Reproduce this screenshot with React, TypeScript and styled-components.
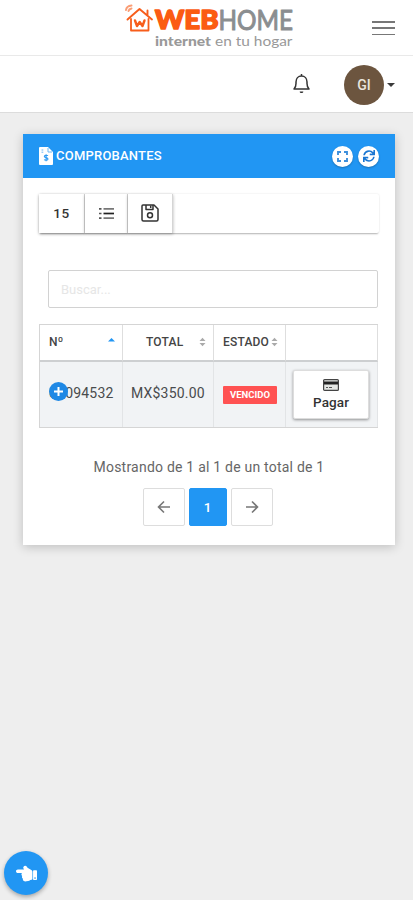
import React from "react";
import styled, { createGlobalStyle } from "styled-components";
import { FaHandPointLeft, FaSync } from "react-icons/fa";

const GlobalStyle = createGlobalStyle`
  * { box-sizing: border-box; }
  body { margin: 0; background: #eeeeee; font-family: Roboto, sans-serif; color: #333; }
  button, input { font-family: inherit; }
  svg { display: block; flex: none; overflow: visible; }
`;

const Page = styled.div`
  width: 413px;
  min-height: 900px;
  display: flex;
  flex-direction: column;
  background: #eeeeee;
`;

const BrandBar = styled.header`
  height: 56px;
  display: flex;
  justify-content: flex-end;
  align-items: flex-start;
  gap: 72px;
  padding-right: 18px;
  background: #fff;
  border-bottom: 1px solid #e9e9e9;
`;

const MenuButton = styled.button`
  width: 23px;
  height: 14px;
  margin-top: 21px;
  padding: 0;
  border: 0;
  background: none;
  display: flex;
  flex-direction: column;
  justify-content: space-between;
`;

const MenuLine = styled.span`
  width: 100%;
  height: 1.5px;
  background: #777;
`;

const UserBar = styled.nav`
  height: 57px;
  display: flex;
  justify-content: flex-end;
  align-items: center;
  padding-right: 18px;
  background: #fff;
  border-bottom: 1px solid #dcdcdc;
`;

const Avatar = styled.div`
  width: 40px;
  height: 40px;
  margin: 1px 3px 0 33px;
  border-radius: 50%;
  background: #6c553f;
  color: #e9e4de;
  display: flex;
  align-items: center;
  justify-content: center;
  font-size: 14px;
  font-weight: 500;
`;

const Caret = styled.span`
  margin-top: 1px;
  border: 4px solid transparent;
  border-top-color: #3b3b3b;
  border-bottom: 0;
`;

const Card = styled.main`
  width: 372px;
  height: 411px;
  margin: 21px 0 0 23px;
  background: #fff;
  box-shadow: 0 2px 10px rgba(0, 0, 0, 0.2);
`;

const CardHeader = styled.div`
  height: 44px;
  padding: 0 16px;
  display: flex;
  align-items: center;
  background: #2196f3;
  color: #fff;
`;

const CardTitle = styled.h1`
  margin: 0 auto 0 3px;
  font-size: 13px;
  line-height: 18px;
  font-weight: 500;
  letter-spacing: 0.22px;
`;

const RoundButton = styled.button`
  width: 21px;
  height: 21px;
  margin-left: 5px;
  padding: 0;
  border: 0;
  border-radius: 50%;
  background: #fff;
  color: #1976d2;
  display: flex;
  align-items: center;
  justify-content: center;
  box-shadow: 0 1px 2px rgba(0, 0, 0, 0.25);
`;

const CardBody = styled.div`
  padding: 16px 16px 0;
`;

const Toolbar = styled.div`
  height: 39px;
  display: flex;
  border-radius: 2px;
  box-shadow: 0 2px 2px -1px rgba(0, 0, 0, 0.28), 0 0 2px rgba(0, 0, 0, 0.12);
`;

const ToolButton = styled.button<{ $width: number }>`
  width: ${(p) => p.$width}px;
  height: 39px;
  padding: 0 0 1px;
  border: 0;
  border-right: 1px solid #d5d5d5;
  background: #fff;
  color: #333;
  font-size: 13.5px;
  font-weight: 500;
  letter-spacing: 0.6px;
  display: flex;
  align-items: center;
  justify-content: center;
  box-shadow: 0 1px 3px rgba(0, 0, 0, 0.3);
`;

const Search = styled.input`
  display: block;
  width: 330px;
  height: 38px;
  margin: 37px 0 16px 9px;
  padding: 0 12px;
  border: 1px solid #d2d2d2;
  border-radius: 2px;
  background: #fff;
  font-size: 13px;
  letter-spacing: 0;
  &::placeholder { color: #e6e6e6; opacity: 1; }
`;

const Table = styled.div`
  width: 339px;
  display: grid;
  grid-template-columns: 83px 91px 72px 92px;
  grid-template-rows: 37px 65px;
  border: 1px solid #d5d5d5;
  border-right: 0;
`;

const HeadCell = styled.div<{ $left: number; $right: number }>`
  display: flex;
  align-items: center;
  justify-content: space-between;
  padding: 0 ${(p) => p.$right}px 1px ${(p) => p.$left}px;
  border-right: 1px solid #dedede;
  border-bottom: 2px solid #cdcfd1;
  font-size: 12px;
  font-weight: 500;
  letter-spacing: 0.2px;
  color: #444;
`;

const Cell = styled.div<{ $left: number; $lift?: number }>`
  position: relative;
  display: flex;
  align-items: center;
  padding: 0 0 ${(p) => p.$lift ?? 0}px ${(p) => p.$left}px;
  border-right: 1px solid #e2e4e6;
  background: #f1f3f5;
  color: #494b4d;
  font-size: 14px;
  letter-spacing: 0.2px;
  white-space: nowrap;
`;

const Expand = styled.span`
  position: absolute;
  left: 9px;
  top: 20px;
  width: 19px;
  height: 19px;
  border-radius: 50%;
  background: #1e88e5;
  display: flex;
  align-items: center;
  justify-content: center;
`;

const Badge = styled.span`
  width: 54px;
  height: 18px;
  border-radius: 1px;
  background: #ff5252;
  color: #fff;
  display: flex;
  align-items: center;
  justify-content: center;
  font-size: 9.5px;
  font-weight: 700;
  letter-spacing: 0;
`;

const PayButton = styled.button`
  width: 76px;
  height: 49px;
  padding: 0;
  border: 1px solid #ddd;
  border-radius: 2px;
  background: #fff;
  color: #333;
  display: flex;
  flex-direction: column;
  align-items: center;
  justify-content: center;
  gap: 3px;
  font-size: 13.5px;
  line-height: 17px;
  font-weight: 500;
  letter-spacing: 0.1px;
  box-shadow: 0 1px 3px rgba(0, 0, 0, 0.4);
`;

const Summary = styled.p`
  margin: 29px 0 11px;
  text-align: center;
  font-size: 14px;
  line-height: 20px;
  letter-spacing: 0.22px;
  color: #666;
`;

const Pager = styled.div`
  display: flex;
  justify-content: center;
  gap: 4px;
  padding-right: 3px;
`;

const PageButton = styled.button<{ $active?: boolean }>`
  width: ${(p) => (p.$active ? 38 : 42)}px;
  height: 38px;
  padding: 0 0 1px;
  border: 1px solid ${(p) => (p.$active ? "#2196f3" : "#dddddd")};
  border-radius: 2px;
  background: ${(p) => (p.$active ? "#2196f3" : "#fff")};
  color: ${(p) => (p.$active ? "#fff" : "#777")};
  font-size: 13.5px;
  font-weight: 500;
  display: flex;
  align-items: center;
  justify-content: center;
`;

const FloatingButton = styled.button`
  position: fixed;
  left: 4px;
  top: 851px;
  width: 44px;
  height: 44px;
  padding: 0;
  border: 0;
  border-radius: 50%;
  background: #2196f3;
  color: #fff;
  display: flex;
  align-items: center;
  justify-content: center;
  box-shadow: 0 2px 4px rgba(0, 0, 0, 0.3);
`;

const Logo = () => (
  <svg width="176" height="54" viewBox="0 0 176 54" role="img" aria-label="WEBHOME">
    <g fill="none" stroke="#f75d1b" strokeLinecap="round" strokeLinejoin="round">
      <path d="M3.500 19.500 15.500 9 28 19.500M23.500 10.500v4" strokeWidth="1.900" />
      <path d="M7 19v11.500h17.500V19" strokeWidth="1.800" />
      <path d="m11 20.500 2 5.500 2.700-4 2.800 4 2-5.500" strokeWidth="2.400" />
      <path d="M2 10Q2.500 6 7.500 5.500M4.500 11q.5-2 3-2.500" strokeWidth="2" opacity=".6" />
    </g>
    <g fontFamily="Lato, sans-serif" strokeLinejoin="round">
      <text x="31" y="29" fontSize="26" fontWeight="900" fill="#fb5b12" stroke="#fb5b12" strokeWidth="1.500" textLength="63.500" lengthAdjust="spacingAndGlyphs">WEB</text>
      <text x="94.500" y="30" fontSize="27" fill="#8b8e90" stroke="#8b8e90" strokeWidth="1" textLength="74.500" lengthAdjust="spacingAndGlyphs">HOME</text>
    </g>
    <g fontFamily="Lato, sans-serif" fontSize="13" fill="#999">
      <text x="31" y="45.500" fontWeight="900" textLength="56" lengthAdjust="spacingAndGlyphs">internet</text>
      <text x="91" y="45.500" textLength="77.500" lengthAdjust="spacingAndGlyphs">en tu hogar</text>
    </g>
  </svg>
);

const BellIcon = () => (
  <svg width="19" height="22" viewBox="0 0 19 22" fill="none" stroke="#333" strokeWidth="1.500" strokeLinejoin="round">
    <path d="M9.500 1v2M2 16c1.500-1.500 2-3 2-5.500V9c0-3.500 2.200-6 5.500-6S15 5.500 15 9v1.500c0 2.500.5 4 2 5.500Z" />
    <path d="M7.700 18.500h3.600c0 1-.8 1.600-1.800 1.600s-1.800-.6-1.800-1.600Z" fill="#333" stroke="none" />
  </svg>
);

const InvoiceIcon = () => (
  <svg width="14" height="18" viewBox="0 0 14 18">
    <path d="M1 0h8l5 5v12a1 1 0 0 1-1 1H1a1 1 0 0 1-1-1V1a1 1 0 0 1 1-1Z" fill="#fff" />
    <path d="M2.500 3h1.800M2.500 5.200h1.800M9 1v4h4" stroke="#6bb8f6" fill="none" />
    <path d="M9 8.700c-.6-.6-3.700-.8-3.700.7 0 1.600 3.700.9 3.700 2.700 0 1.600-3 1.400-3.900.6M7.100 7.300v7" stroke="#2c9af3" strokeWidth="1.100" fill="none" />
  </svg>
);

const ExpandIcon = () => (
  <svg width="11" height="11" viewBox="0 0 11 11" fill="none" stroke="#3d8fdc" strokeWidth="1.900">
    <path d="M1 4V1h3M7 1h3v3M10 7v3H7M4 10H1V7" />
  </svg>
);

const ListIcon = () => (
  <svg width="15" height="13" viewBox="0 0 15 13" fill="none">
    <path d="M0 1.800h2.500M0 6.500h2.500M0 11.200h2.500" stroke="#555" strokeWidth="1.700" />
    <path d="M4.500 1.800H15M4.500 11.200H15" stroke="#777" strokeWidth="1.700" />
    <path d="M4.500 6.500H15" stroke="#222" strokeWidth="1.700" />
  </svg>
);

const SaveIcon = () => (
  <svg width="18" height="18" viewBox="0 0 18 18" fill="none" stroke="#333" strokeWidth="1.500" strokeLinejoin="round">
    <path d="M2 1h11l4 4v10.500q0 1.500-1.500 1.500h-13Q1 17 1 15.500V2q0-1 1-1Z" />
    <path d="M5 1v4.500h7V1M9.700 1.500V4" />
    <circle cx="9" cy="11.300" r="2.500" />
  </svg>
);

const SortIcon = ({ active = false }: { active?: boolean }) => (
  <svg width="7" height="10" viewBox="0 0 7 10">
    {active ? (
      <path d="M0 4.500 3.500 1 7 4.500Z" fill="#2196f3" />
    ) : (
      <path d="M.5 4 3.500.8 6.500 4ZM.5 6l3 3.200 3-3.200Z" fill="#aaa" />
    )}
  </svg>
);

const CardIcon = () => (
  <svg width="16" height="12" viewBox="0 0 16 12">
    <rect x=".6" y=".6" width="14.800" height="10.800" rx="1" fill="#e5e7e4" stroke="#444" strokeWidth="1.200" />
    <path d="M1 2.500h14v3H1Z" fill="#222" />
    <path d="M3 8.500h2M6 8.500h3" stroke="#555" />
  </svg>
);

const ArrowIcon = ({ right = false }: { right?: boolean }) => (
  <svg width="14" height="14" viewBox="0 0 14 14" fill="none" stroke="#777" strokeWidth="1.600">
    <path d={right ? "M1 7h11M7 1.500 12.500 7 7 12.500" : "M13 7H2M7 1.500 1.500 7 7 12.500"} />
  </svg>
);

export default function App() {
  return (
    <Page>
      <GlobalStyle />
      <BrandBar>
        <Logo />
        <MenuButton aria-label="Menú">
          <MenuLine />
          <MenuLine />
          <MenuLine />
        </MenuButton>
      </BrandBar>
      <UserBar>
        <BellIcon />
        <Avatar>GI</Avatar>
        <Caret />
      </UserBar>
      <Card>
        <CardHeader>
          <InvoiceIcon />
          <CardTitle>COMPROBANTES</CardTitle>
          <RoundButton aria-label="Ampliar"><ExpandIcon /></RoundButton>
          <RoundButton aria-label="Actualizar"><FaSync size={12} /></RoundButton>
        </CardHeader>
        <CardBody>
          <Toolbar>
            <ToolButton $width={46}>15</ToolButton>
            <ToolButton $width={43} aria-label="Columnas"><ListIcon /></ToolButton>
            <ToolButton $width={45} aria-label="Guardar"><SaveIcon /></ToolButton>
          </Toolbar>
          <Search placeholder="Buscar..." />
          <Table>
            <HeadCell $left={9} $right={7}>Nº<SortIcon active /></HeadCell>
            <HeadCell $left={23} $right={7}>TOTAL<SortIcon /></HeadCell>
            <HeadCell $left={9} $right={7}>ESTADO<SortIcon /></HeadCell>
            <HeadCell $left={0} $right={0} />
            <Cell $left={9} $lift={3}>
              00094532
              <Expand>
                <svg width="9" height="9" viewBox="0 0 9 9" stroke="#fff" strokeWidth="2">
                  <path d="M4.500 0v9M0 4.500h9" />
                </svg>
              </Expand>
            </Cell>
            <Cell $left={8} $lift={3}>MX$350.00</Cell>
            <Cell $left={9}><Badge>VENCIDO</Badge></Cell>
            <Cell $left={7}><PayButton><CardIcon />Pagar</PayButton></Cell>
          </Table>
          <Summary>Mostrando de 1 al 1 de un total de 1</Summary>
          <Pager>
            <PageButton aria-label="Anterior"><ArrowIcon /></PageButton>
            <PageButton $active>1</PageButton>
            <PageButton aria-label="Siguiente"><ArrowIcon right /></PageButton>
          </Pager>
        </CardBody>
      </Card>
      <FloatingButton aria-label="Abrir"><FaHandPointLeft size={21} /></FloatingButton>
    </Page>
  );
}
